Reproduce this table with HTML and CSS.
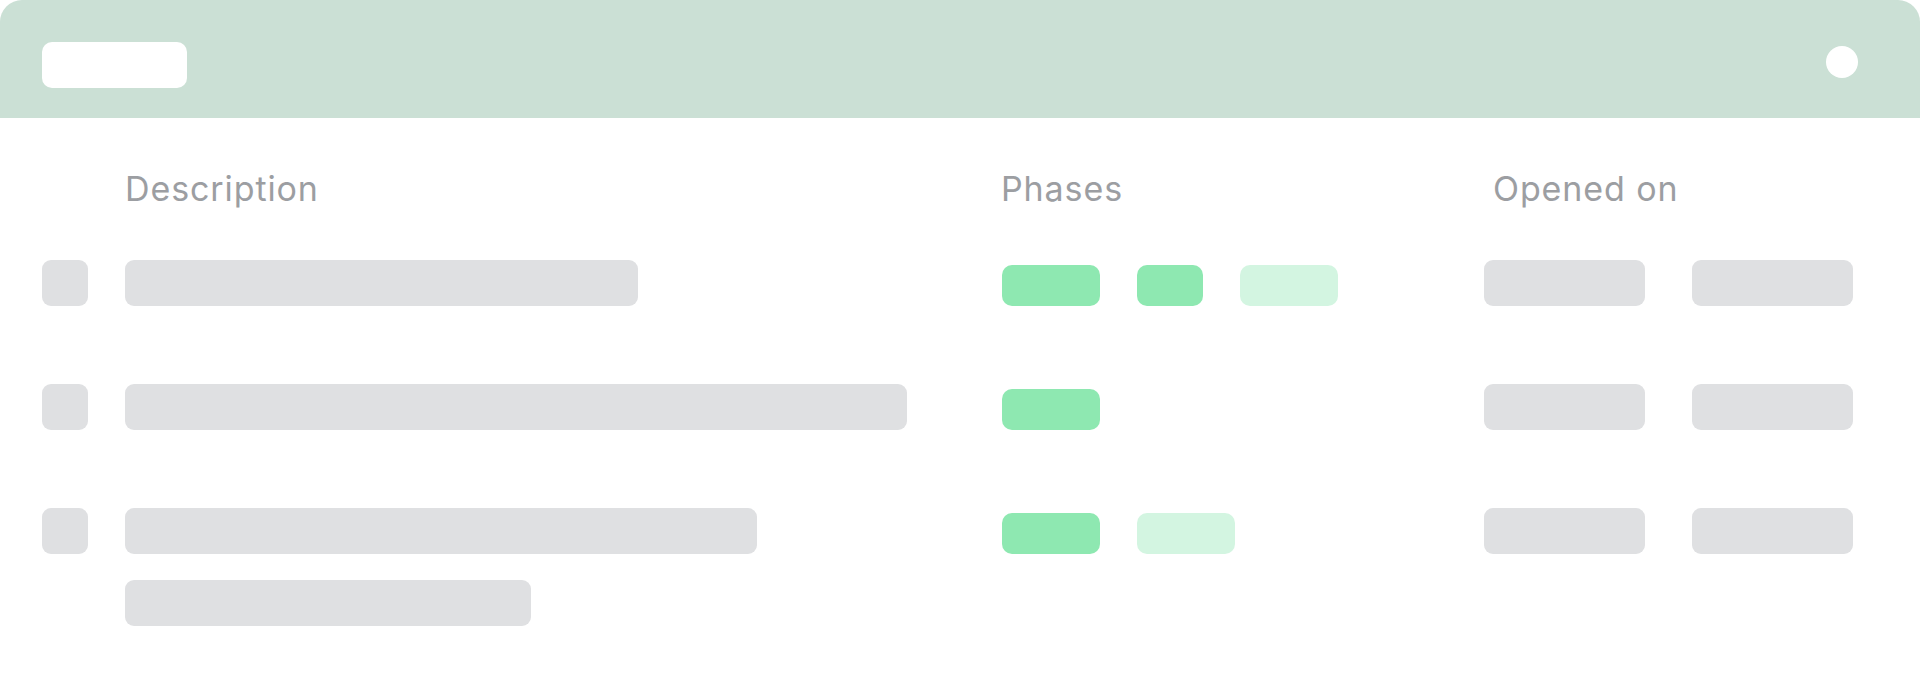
FILE: index.html
```html
<!DOCTYPE html>
<html lang="en">
<head>
<meta charset="utf-8">
<title>Issues skeleton</title>
<link rel="stylesheet" href="styles.css">
</head>
<body>
<div class="card">
  <header class="card-header">
    <div class="title-pill"></div>
    <div class="status-dot"></div>
  </header>
  <div class="table">
    <div class="th th-check"></div>
    <div class="th">Description</div>
    <div class="th">Phases</div>
    <div class="th th-date">Opened on</div>

    <div class="cell"><div class="check"></div></div>
    <div class="cell desc"><div class="bar w1"></div></div>
    <div class="cell phases">
      <div class="pill pill-dark pw-lg"></div>
      <div class="pill pill-dark pw-sm"></div>
      <div class="pill pill-light pw-lg"></div>
    </div>
    <div class="cell dates"><div class="bar date"></div><div class="bar date"></div></div>

    <div class="cell"><div class="check"></div></div>
    <div class="cell desc"><div class="bar w2"></div></div>
    <div class="cell phases">
      <div class="pill pill-dark pw-lg"></div>
    </div>
    <div class="cell dates"><div class="bar date"></div><div class="bar date"></div></div>

    <div class="cell"><div class="check"></div></div>
    <div class="cell desc"><div class="bar w3"></div><div class="bar w4"></div></div>
    <div class="cell phases">
      <div class="pill pill-dark pw-lg"></div>
      <div class="pill pill-light pw-lg"></div>
    </div>
    <div class="cell dates"><div class="bar date"></div><div class="bar date"></div></div>
  </div>
</div>
</body>
</html>
```
FILE: styles.css
```css
* { box-sizing: border-box; }
html, body { margin: 0; padding: 0; background: #ffffff; }
body {
  font-family: Inter, "Liberation Sans", Arial, sans-serif;
  width: 1920px;
  height: 685px;
  overflow: hidden;
}
.card {
  width: 1920px;
  height: 685px;
  background: #ffffff;
  border-radius: 22px;
  overflow: hidden;
}
.card-header {
  height: 118px;
  background: #cbe0d5;
  display: flex;
  justify-content: space-between;
  align-items: flex-start;
  padding: 42px 62px 0 42px;
}
.title-pill {
  width: 145px;
  height: 46px;
  background: #ffffff;
  border-radius: 10px;
}
.status-dot {
  width: 32px;
  height: 32px;
  margin-top: 4px;
  background: #ffffff;
  border-radius: 50%;
}
.table {
  display: grid;
  grid-template-columns: 46px 839px 446px 1fr;
  column-gap: 37px;
  row-gap: 78px;
  padding: 54px 0 0 42px;
}
.th {
  font-size: 34px;
  line-height: 34px;
  color: #9c9ea2;
  letter-spacing: 0.9px;
  margin-bottom: -24px;
}
.th-date { padding-left: 9px; }
.cell { align-self: start; }
.check {
  width: 46px;
  height: 46px;
  background: #dfe0e2;
  border-radius: 9px;
}
.bar {
  height: 46px;
  background: #dfe0e2;
  border-radius: 9px;
}
.desc { display: flex; flex-direction: column; gap: 26px; }
.w1 { width: 513px; }
.w2 { width: 782px; }
.w3 { width: 632px; }
.w4 { width: 406px; }
.phases {
  height: 46px;
  display: flex;
  align-items: flex-end;
  gap: 37px;
  padding-left: 1px;
}
.pill {
  height: 41px;
  border-radius: 10px;
}
.pill-dark { background: #8ee8b1; }
.pill-light { background: #d3f5e1; }
.pw-lg { width: 98px; }
.pw-sm { width: 66px; }
.dates { display: flex; gap: 47px; }
.date { width: 161px; }
```
